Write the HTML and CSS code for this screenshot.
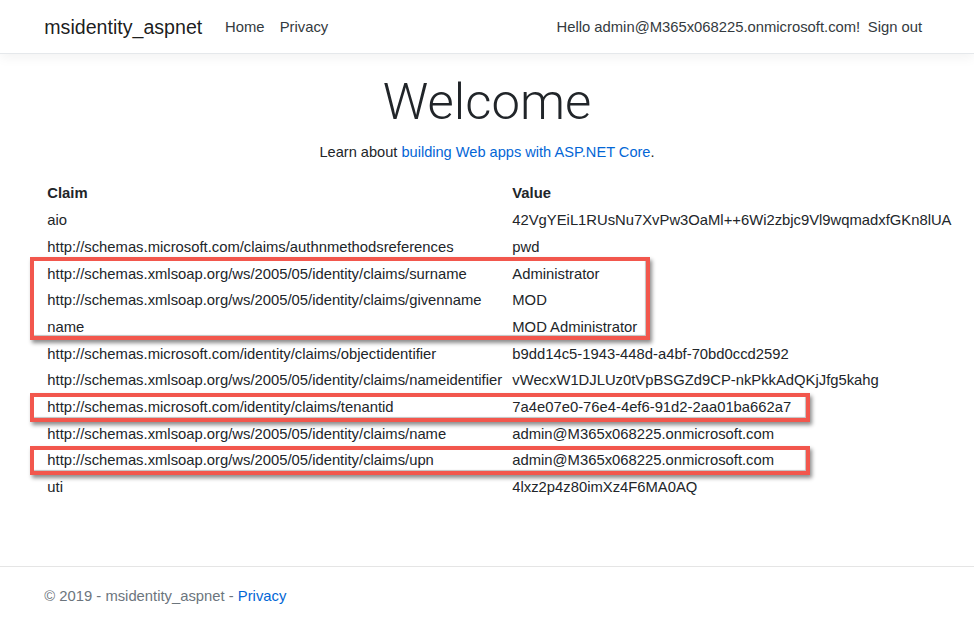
FILE: index.html
```html
<!DOCTYPE html>
<html lang="en">
<head>
<meta charset="utf-8">
<title>Home Page - msidentity_aspnet</title>
<link rel="stylesheet" href="styles.css">
</head>
<body>
<header class="navbar">
  <div class="container nav-inner">
    <a class="brand" href="#">msidentity_aspnet</a>
    <ul class="nav nav-grow">
      <li><a class="nav-link" href="#">Home</a></li>
      <li><a class="nav-link" href="#">Privacy</a></li>
    </ul>
    <ul class="nav">
      <li><span class="navbar-text">Hello admin@M365x068225.onmicrosoft.com!</span></li>
      <li><a class="nav-link" href="#">Sign out</a></li>
    </ul>
  </div>
</header>
<main class="container main">
  <div class="intro">
    <h1 class="display">Welcome</h1>
    <p>Learn about <a href="#">building Web apps with ASP.NET Core</a>.</p>
  </div>
  <div class="claims-wrap">
    <table class="claims">
      <colgroup><col class="c1"><col class="c2"></colgroup>
      <thead>
        <tr><th>Claim</th><th>Value</th></tr>
      </thead>
      <tbody>
        <tr><td>aio</td><td>42VgYEiL1RUsNu7XvPw3OaMl++6Wi2zbjc9Vl9wqmadxfGKn8lUA</td></tr>
        <tr><td>http://schemas.microsoft.com/claims/authnmethodsreferences</td><td>pwd</td></tr>
        <tr><td>http://schemas.xmlsoap.org/ws/2005/05/identity/claims/surname</td><td>Administrator</td></tr>
        <tr><td>http://schemas.xmlsoap.org/ws/2005/05/identity/claims/givenname</td><td>MOD</td></tr>
        <tr><td>name</td><td>MOD Administrator</td></tr>
        <tr><td>http://schemas.microsoft.com/identity/claims/objectidentifier</td><td>b9dd14c5-1943-448d-a4bf-70bd0ccd2592</td></tr>
        <tr><td>http://schemas.xmlsoap.org/ws/2005/05/identity/claims/nameidentifier</td><td>vWecxW1DJLUz0tVpBSGZd9CP-nkPkkAdQKjJfg5kahg</td></tr>
        <tr><td>http://schemas.microsoft.com/identity/claims/tenantid</td><td>7a4e07e0-76e4-4ef6-91d2-2aa01ba662a7</td></tr>
        <tr><td>http://schemas.xmlsoap.org/ws/2005/05/identity/claims/name</td><td>admin@M365x068225.onmicrosoft.com</td></tr>
        <tr><td>http://schemas.xmlsoap.org/ws/2005/05/identity/claims/upn</td><td>admin@M365x068225.onmicrosoft.com</td></tr>
        <tr><td>uti</td><td>4lxz2p4z80imXz4F6MA0AQ</td></tr>
      </tbody>
    </table>
    <div class="mark mark-1"></div>
    <div class="mark mark-2"></div>
    <div class="mark mark-3"></div>
  </div>
</main>
<footer class="footer">
  <div class="container">&copy; 2019 - msidentity_aspnet - <a href="#">Privacy</a></div>
</footer>
</body>
</html>
```

FILE: styles.css
```css
html { font-size: 15.25px; }
* { box-sizing: border-box; }
body {
  margin: 0;
  min-height: 625px;
  display: flex;
  flex-direction: column;
  font-family: "Liberation Sans", Arial, sans-serif;
  font-size: 14.8px;
  line-height: 22.9px;
  color: #212529;
  background: #fff;
}
a { color: #0366d6; text-decoration: none; }
.container {
  margin: 0 30px;
  padding: 0 14.3px;
}
.navbar {
  border-bottom: 1px solid #e5e8eb;
  box-shadow: 0 4px 11px rgba(0,0,0,.05);
  padding: 7.6px 0;
  margin-bottom: 1rem;
}
.nav-inner {
  display: flex;
  align-items: center;
}
.brand {
  color: rgba(0,0,0,.9);
  font-size: 19.6px;
  line-height: 28.6px;
  padding: 5.3px 0 4.3px;
  margin-right: 1rem;
}
.nav {
  list-style: none;
  margin: 0;
  padding: 0;
  display: flex;
  align-items: center;
}
.nav-grow { flex-grow: 1; }
.nav-link {
  display: block;
  color: #343a40;
  padding: 8.1px 7.6px 7.1px;
}
.navbar-text {
  display: inline-block;
  color: #343a40;
  padding: 8.1px 0 7.1px;
}
.main { flex: 1 0 auto; padding-bottom: 1rem; }
.intro { text-align: center; }
.display {
  font-family: Roboto, "Liberation Sans", sans-serif;
  font-size: 50.8px;
  font-weight: 300;
  line-height: 64px;
  margin: 0 0 .5rem;
}
.intro p { margin: 0 0 1rem; font-size: 14.6px; }
.claims-wrap { position: relative; }
.claims {
  border-collapse: separate;
  border-spacing: 2px;
  table-layout: fixed;
  width: 906px;
}
.c1 { width: 463px; }
.claims th, .claims td {
  padding: 1px;
  height: 24.7px;
  line-height: 22.6px;
  text-align: left;
  white-space: nowrap;
  overflow: visible;
}
.claims th { font-weight: 700; }
.mark {
  position: absolute;
  left: -14px;
  border: 4px solid #f2574d;
  box-shadow: 2px 3px 4px rgba(0,0,0,.45), inset -1px -1px 1px rgba(0,0,0,.25);
}
.mark-1 { top: 78px; width: 620px; height: 83px; }
.mark-2 { top: 214px; width: 780px; height: 29px; }
.mark-3 { top: 267px; width: 780px; height: 29px; }
.footer {
  border-top: 1px solid #e5e5e5;
  line-height: 57px;
  padding-top: 1px;
  color: #6c757d;
  white-space: nowrap;
}
```
